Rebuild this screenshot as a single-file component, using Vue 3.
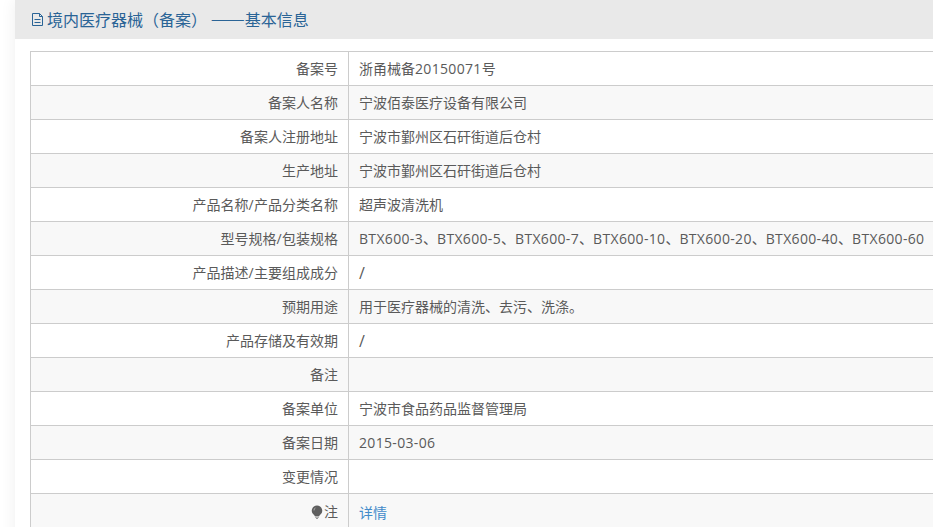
<script setup>
const rows = [
  ['备案号', '浙甬械备20150071号'],
  ['备案人名称', '宁波佰泰医疗设备有限公司'],
  ['备案人注册地址', '宁波市鄞州区石矸街道后仓村'],
  ['生产地址', '宁波市鄞州区石矸街道后仓村'],
  ['产品名称/产品分类名称', '超声波清洗机'],
  ['型号规格/包装规格', 'BTX600-3、BTX600-5、BTX600-7、BTX600-10、BTX600-20、BTX600-40、BTX600-60'],
  ['产品描述/主要组成成分', '/'],
  ['预期用途', '用于医疗器械的清洗、去污、洗涤。'],
  ['产品存储及有效期', '/'],
  ['备注', ''],
  ['备案单位', '宁波市食品药品监督管理局'],
  ['备案日期', '2015-03-06'],
  ['变更情况', ''],
]
const parts = (s) => s.split(/([\x00-\x7f]+)/).filter(Boolean).map((text) => ({ text, latin: /^[\x00-\x7f]/.test(text) }))
</script>

<template>
  <div class="page">
    <div class="panel">
      <header class="head">
        <svg class="doc" width="13" height="15" viewBox="0 0 13 15" fill="none" stroke="#2a6496" stroke-width="1">
          <path d="M1.500 1.500h7l3 3v9h-10z" />
          <path d="M8.500 1.500v3h3M3.500 7.500h6M3.500 10.500h6" />
        </svg>
        <h1 class="title">境内医疗器械<span class="paren">（</span>备案<span class="paren">）</span> <span class="dash">——</span>基本信息</h1>
      </header>
      <div class="body">
        <table class="info">
          <tbody>
            <tr v-for="r in rows" :key="r[0]">
              <th><span v-for="(p, i) in parts(r[0])" :key="i" :class="{ latin: p.latin }">{{ p.text }}</span></th>
              <td :class="{ slash: r[1] === '/' }"><span v-for="(p, i) in parts(r[1])" :key="i" :class="{ latin: p.latin }">{{ p.text }}</span></td>
            </tr>
            <tr class="note">
              <th>
                <svg class="bulb" width="12" height="14" viewBox="0 0 12 14">
                  <path fill="#5f5f5f" d="M6 .5a5.200 5.200 0 0 1 3.200 9.300c-.6.500-.9 1-1 1.500H3.800c-.1-.5-.4-1-1-1.500A5.200 5.200 0 0 1 6 .5z" />
                  <path fill="#a8a8a8" d="M2.500 5.500a3.500 3.500 0 0 1 2.800-3.300c-1 1-1.700 2-1.900 3.300z" />
                  <path fill="#777" d="M4 11.800h4v.8H4zM5 13h2v.7H5z" />
                </svg>注
              </th>
              <td><a class="link">详情</a></td>
            </tr>
          </tbody>
        </table>
      </div>
    </div>
  </div>
</template>

<style>
html, body {
  margin: 0;
  background: #fff;
  overflow: hidden;
}
</style>

<style scoped>
.page {
  width: 933px;
  height: 527px;
  padding-left: 15px;
  box-sizing: border-box;
  overflow: hidden;
  font-family: "Noto Sans CJK SC", sans-serif;
  font-size: 14px;
  color: #5a5a5a;
}
.panel {
  width: 1000px;
  min-height: 600px;
  background: #fff;
  box-shadow: 0 0 15px rgba(0, 0, 0, 0.07);
}
.head {
  height: 39px;
  background: #e9e9e9;
  display: flex;
  align-items: center;
  padding: 0 0 2px 16px;
  box-sizing: border-box;
}
.doc {
  flex: none;
  margin-right: 3px;
  position: relative;
  top: 1px;
}
.title {
  margin: 0;
  font-size: 16px;
  line-height: 24px;
  font-weight: 400;
  color: #2a6496;
  white-space: pre;
}
.paren {
  font-family: "Noto Sans CJK TC", sans-serif;
}
.dash {
  font-size: 20.500px;
  line-height: 1;
  font-weight: 300;
}
.body {
  padding: 12px 0 0 15px;
}
.info {
  width: 1100px;
  border-collapse: collapse;
  table-layout: fixed;
}
.info tr {
  height: 34px;
}
.info tr:nth-child(even) {
  background: #f8f8f8;
}
.info th,
.info td {
  border: 1px solid #ccc;
  padding: 0 10px 2px;
  font-weight: 400;
  white-space: nowrap;
  box-sizing: border-box;
}
.info .note th,
.info .note td {
  padding-bottom: 0;
}
.info th {
  width: 318px;
  text-align: right;
}
.latin {
  font-family: "Open Sans", sans-serif;
  letter-spacing: 0.330px;
}
.info .slash {
  font-size: 16px;
}
.bulb {
  vertical-align: -2px;
  margin-right: 1px;
}
.link {
  color: #428bca;
  position: relative;
  top: 1px;
}
</style>
